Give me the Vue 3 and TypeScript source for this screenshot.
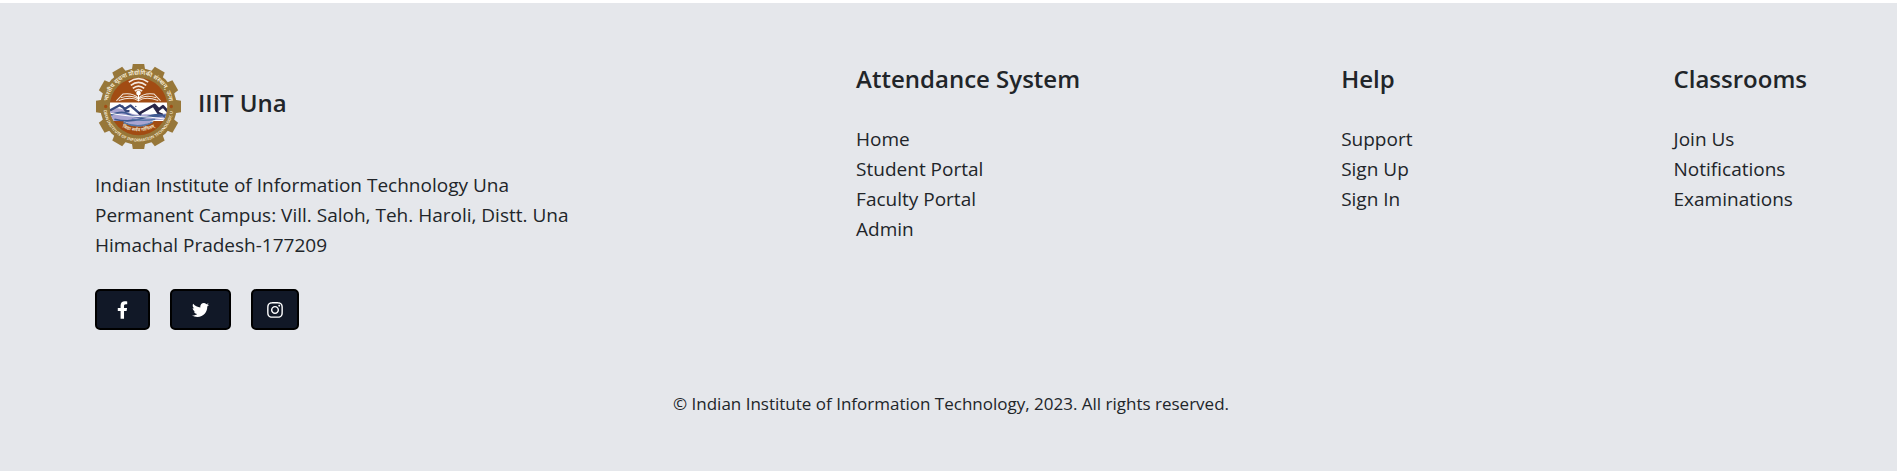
<script setup lang="ts">
interface LinkGroup {
  title: string
  links: string[]
}

interface Social {
  name: string
  viewBox: string
  path: string
}

const groups: LinkGroup[] = [
  { title: 'Attendance System', links: ['Home', 'Student Portal', 'Faculty Portal', 'Admin'] },
  { title: 'Help', links: ['Support', 'Sign Up', 'Sign In'] },
  { title: 'Classrooms', links: ['Join Us', 'Notifications', 'Examinations'] },
]

const socials: Social[] = [
  {
    name: 'facebook',
    viewBox: '0 0 320 512',
    path: 'M279.14 288l14.22-92.66h-88.91v-60.13c0-25.35 12.42-50.06 52.24-50.06h40.42V6.26S260.43 0 225.36 0c-73.22 0-121.08 44.38-121.08 124.72v70.62H22.89V288h81.39v224h100.17V288z',
  },
  {
    name: 'twitter',
    viewBox: '0 0 512 512',
    path: 'M459.37 151.716c.325 4.548.325 9.097.325 13.645 0 138.72-105.583 298.558-298.558 298.558-59.452 0-114.68-17.219-161.137-47.106 8.447.974 16.568 1.299 25.34 1.299 49.055 0 94.213-16.568 130.274-44.832-46.132-.975-84.792-31.188-98.112-72.772 6.498.974 12.995 1.624 19.818 1.624 9.421 0 18.843-1.3 27.614-3.573-48.081-9.747-84.143-51.98-84.143-102.985v-1.299c13.969 7.797 30.214 12.67 47.431 13.319-28.264-18.843-46.781-51.005-46.781-87.391 0-19.492 5.197-37.36 14.294-52.954 51.655 63.675 129.3 105.258 216.365 109.807-1.624-7.797-2.599-15.918-2.599-24.04 0-57.828 46.782-104.934 104.934-104.934 30.213 0 57.502 12.67 76.67 33.137 23.715-4.548 46.456-13.32 66.599-25.34-7.798 24.366-24.366 44.833-46.132 57.827 21.117-2.273 41.584-8.122 60.426-16.243-14.292 20.791-32.161 39.308-52.628 54.253z',
  },
  {
    name: 'instagram',
    viewBox: '0 0 448 512',
    path: 'M224.1 141c-63.6 0-114.9 51.3-114.9 114.9s51.3 114.9 114.9 114.9S339 319.5 339 255.9 287.7 141 224.1 141zm0 189.6c-41.1 0-74.7-33.5-74.7-74.7s33.5-74.7 74.7-74.7 74.7 33.5 74.7 74.7-33.6 74.7-74.7 74.7zm146.4-194.3c0 14.9-12 26.8-26.8 26.8-14.9 0-26.8-12-26.8-26.8s12-26.8 26.8-26.8 26.8 12 26.8 26.8zm76.1 27.2c-1.7-35.9-9.9-67.7-36.2-93.9-26.2-26.2-58-34.4-93.9-36.2-37-2.1-147.9-2.1-184.9 0-35.8 1.7-67.6 9.9-93.9 36.1s-34.4 58-36.2 93.9c-2.1 37-2.1 147.9 0 184.9 1.7 35.9 9.9 67.7 36.2 93.9s58 34.4 93.9 36.2c37 2.1 147.9 2.1 184.9 0 35.9-1.7 67.7-9.9 93.9-36.2 26.2-26.2 34.4-58 36.2-93.9 2.1-37 2.1-147.8 0-184.8zM398.8 388c-7.8 19.6-22.9 34.7-42.6 42.6-29.5 11.7-99.5 9-132.1 9s-102.7 2.6-132.1-9c-19.6-7.8-34.7-22.9-42.6-42.6-11.7-29.5-9-99.5-9-132.1s-2.6-102.7 9-132.1c7.8-19.6 22.9-34.7 42.6-42.6 29.5-11.7 99.5-9 132.1-9s102.7-2.6 132.1 9c19.6 7.8 34.7 22.9 42.6 42.6 11.7 29.5 9 99.5 9 132.1s2.7 102.7-9 132.1z',
  },
]

const teeth = Array.from({ length: 12 }, (_, i) => i * 30)
</script>

<template>
  <footer class="footer">
    <div class="columns">
      <section class="about">
        <div class="brand">
          <svg class="logo" viewBox="-130 -128 260 256" aria-hidden="true">
            <defs>
              <clipPath id="disc"><circle r="86" /></clipPath>
              <path id="top-arc" d="M-91 -17A92 92 0 0 1 91 -17" />
              <path id="bottom-arc" d="M-103 15A104 104 0 0 0 103 15" />
              <path id="motto-arc" d="M-53 60Q0 88 53 60" />
            </defs>
            <g fill="#977739">
              <circle r="114" />
              <path v-for="a in teeth" :key="a" d="M-20 -108L-17 -127H17L20 -108Z" :transform="`rotate(${a})`" />
            </g>
            <circle r="86" fill="#a24c13" />
            <g clip-path="url(#disc)">
              <path d="M-90 -12H90V43H46Q0 75 -46 43H-90Z" fill="#fff" />
              <path d="M-90 12Q-60 -2 -38 13T12 24T90 20V40H45Q20 58 -12 58L-45 43H-90Z" fill="#a9a5d2" />
              <path d="M-34 12L-22 0L0 22Q28 6 46 2L58 14L70 8L82 20Q30 30 -34 12Z" fill="#fff" />
              <g fill="none" stroke-linejoin="round">
                <path d="M-86 12L-56 -4L-40 7L-24 -3L8 25M-50 -2L-38 13L-27 14" stroke="#36477b" stroke-width="7" />
                <path d="M0 22L48 -5L61 9L73 -1L90 18M46 -1L60 20L72 25" stroke="#292648" stroke-width="8" />
                <path d="M-86 27Q-48 10 -28 24T85 26M-72 38Q-25 50 20 33T82 33" stroke="#3f5a91" stroke-width="5" />
                <path d="M-45 48Q0 68 42 46M-20 38Q15 44 50 38" stroke="#5577a8" stroke-width="5" />
                <path d="M-86 20Q-35 29 0 30T78 37" stroke="#fff" stroke-width="3" />
              </g>
              <circle cx="-8" cy="0" r="2" fill="#36477b" />
            </g>
            <g fill="none" stroke="#f4e9df" stroke-width="5">
              <path d="M-29 -73Q0 -94 29 -73M-23 -63Q0 -81 23 -63M-17 -54Q0 -68 17 -54M-11 -46Q0 -55 11 -46" />
              <path d="M-66 -17L-47 -37Q-17 -42 0 -25Q17 -42 47 -37L66 -17M-59 -18Q-20 -32 0 -17Q20 -32 59 -18M-53 -26Q-20 -37 0 -21Q20 -37 53 -26" stroke-width="3" />
            </g>
            <circle cy="-40" r="7" fill="#fff" />
            <path d="M0 -36V-16" stroke="#fff" stroke-width="3" />
            <circle cx="-98" r="5" fill="#a24c13" />
            <circle cx="98" r="5" fill="#a24c13" />
            <text class="seal hindi"><textPath href="#top-arc" startOffset="50%">भारतीय सूचना प्रौद्योगिकी संस्थान, ऊना</textPath></text>
            <text class="seal latin"><textPath href="#bottom-arc" startOffset="50%">INDIAN INSTITUTE OF INFORMATION TECHNOLOGY, UNA</textPath></text>
            <text class="seal motto"><textPath href="#motto-arc" startOffset="50%">विद्या सर्वत्र गोपितम्</textPath></text>
          </svg>
          <h2 class="heading name">IIIT Una</h2>
        </div>
        <address class="address">
          Indian Institute of Information Technology Una<br />
          Permanent Campus: Vill. Saloh, Teh. Haroli, Distt. Una<br />
          Himachal Pradesh-177209
        </address>
        <div class="socials">
          <button v-for="s in socials" :key="s.name" type="button" :class="['social', s.name]" :aria-label="s.name">
            <svg :viewBox="s.viewBox" aria-hidden="true"><path :d="s.path" /></svg>
          </button>
        </div>
      </section>
      <nav v-for="g in groups" :key="g.title" class="group" :aria-label="g.title">
        <h2 class="heading">{{ g.title }}</h2>
        <ul class="links">
          <li v-for="l in g.links" :key="l"><a href="#">{{ l }}</a></li>
        </ul>
      </nav>
    </div>
    <p class="copyright">© Indian Institute of Information Technology, 2023. All rights reserved.</p>
  </footer>
</template>

<style>
body {
  background: #fff;
}
</style>

<style scoped>
.footer {
  box-sizing: border-box;
  margin-top: 3px;
  padding: 60px 90px 52px 95px;
  background: #e5e7eb;
  color: #212529;
  font-family: 'Segoe UI', 'Open Sans', sans-serif;
  font-size: 19px;
  font-weight: 400;
  line-height: 30px;
}
.columns {
  display: flex;
  justify-content: space-between;
}
.about {
  flex: 0 1 500px;
}
.brand {
  display: flex;
  align-items: center;
  gap: 16px;
}
.logo {
  width: 87px;
  height: 87px;
}
.seal {
  fill: #f7eedb;
  text-anchor: middle;
  font-family: 'Noto Sans', sans-serif;
  font-weight: 600;
}
.hindi {
  font-size: 18px;
}
.latin {
  font-size: 12px;
}
.motto {
  font-size: 14px;
}
.heading {
  margin: 0;
  font-size: 24px;
  font-weight: 600;
  line-height: 32px;
}
.name {
  margin-bottom: 8px;
}
.address {
  margin-top: 20px;
  font-style: normal;
}
.socials {
  display: flex;
  gap: 20px;
  margin-top: 29px;
}
.social {
  display: flex;
  align-items: center;
  justify-content: center;
  box-sizing: border-box;
  height: 41px;
  padding: 0 20px;
  border: 2px solid #000;
  border-radius: 5px;
  background: #111827;
  color: #fff;
}
.social svg {
  height: 18px;
  fill: currentColor;
}
.facebook svg {
  width: 11px;
}
.twitter svg {
  width: 17px;
}
.instagram {
  padding: 0 14px;
}
.instagram svg {
  width: 16px;
}
.links {
  margin: 29px 0 0;
  padding: 0;
  list-style: none;
}
.links a {
  color: inherit;
  text-decoration: none;
}
.copyright {
  margin: 59px 0 0;
  text-align: center;
  font-size: 17px;
}
</style>
